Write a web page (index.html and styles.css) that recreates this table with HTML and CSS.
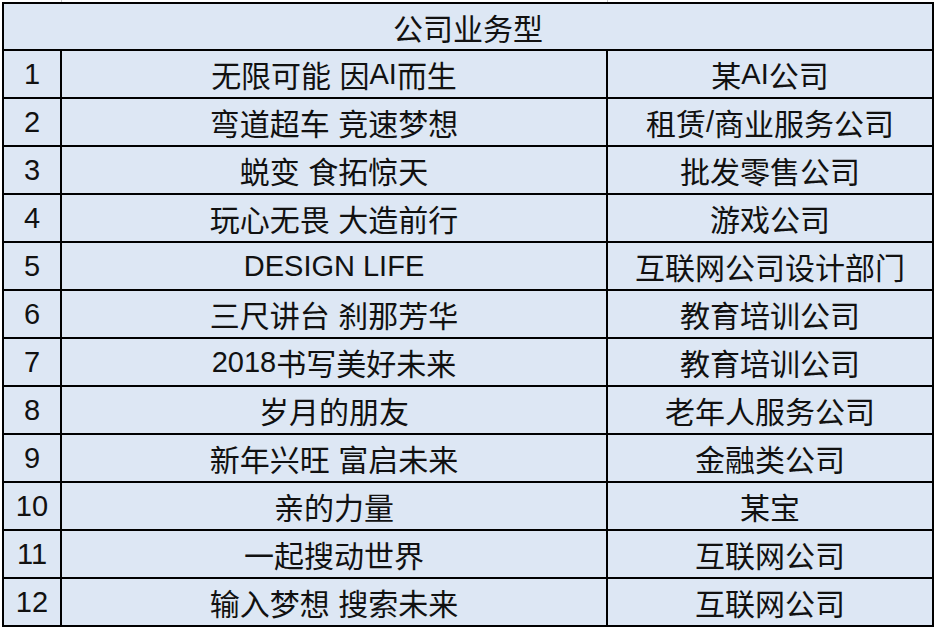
FILE: index.html
```html
<!DOCTYPE html>
<html lang="zh">
<head>
<meta charset="utf-8">
<title>公司业务型</title>
<link rel="stylesheet" href="styles.css">
</head>
<body>
<div class="sheet">
  <div class="gridmarks"><span class="mark m1"></span><span class="mark m2"></span></div>
  <div class="table">
    <div class="cell head">公司业务型</div>
    <div class="cell lat">1</div><div class="cell">无限可能 因<span class="lat">AI</span>而生</div><div class="cell">某<span class="lat">AI</span>公司</div>
    <div class="cell lat">2</div><div class="cell">弯道超车 竞速梦想</div><div class="cell">租赁<span class="lat">/</span>商业服务公司</div>
    <div class="cell lat">3</div><div class="cell">蜕变 食拓惊天</div><div class="cell">批发零售公司</div>
    <div class="cell lat">4</div><div class="cell">玩心无畏 大造前行</div><div class="cell">游戏公司</div>
    <div class="cell lat">5</div><div class="cell lat">DESIGN LIFE</div><div class="cell">互联网公司设计部门</div>
    <div class="cell lat">6</div><div class="cell">三尺讲台 刹那芳华</div><div class="cell">教育培训公司</div>
    <div class="cell lat">7</div><div class="cell"><span class="lat">2018</span>书写美好未来</div><div class="cell">教育培训公司</div>
    <div class="cell lat">8</div><div class="cell">岁月的朋友</div><div class="cell">老年人服务公司</div>
    <div class="cell lat">9</div><div class="cell">新年兴旺 富启未来</div><div class="cell">金融类公司</div>
    <div class="cell lat">10</div><div class="cell">亲的力量</div><div class="cell">某宝</div>
    <div class="cell lat">11</div><div class="cell">一起搜动世界</div><div class="cell">互联网公司</div>
    <div class="cell lat">12</div><div class="cell">输入梦想 搜索未来</div><div class="cell">互联网公司</div>
  </div>
</div>
</body>
</html>
```
FILE: styles.css
```css
html, body {
  margin: 0;
  padding: 0;
  background: #ffffff;
}
.sheet {
  width: 936px;
  height: 628px;
  box-sizing: border-box;
  padding: 0 0 0 2px;
  position: relative;
}
.gridmarks {
  height: 2px;
  position: relative;
}
.mark {
  position: absolute;
  top: 0;
  width: 1px;
  height: 2px;
  background: #c8c8c8;
}
.m1 { left: 59px; }
.m2 { left: 605px; }
.table {
  width: 932px;
  box-sizing: border-box;
  display: grid;
  grid-template-columns: 56px 544px 324px;
  grid-template-rows: 45px repeat(12, 46px);
  gap: 2px;
  padding: 2px;
  background: #000000;
}
.cell {
  background: #dde7f4;
  color: #111111;
  font-family: "Liberation Sans", "Noto Sans CJK SC", sans-serif;
  font-size: 30px;
  display: flex;
  align-items: center;
  justify-content: center;
  white-space: pre;
}
.lat {
  font-size: 29px;
}
.head {
  grid-column: 1 / 4;
}
```
